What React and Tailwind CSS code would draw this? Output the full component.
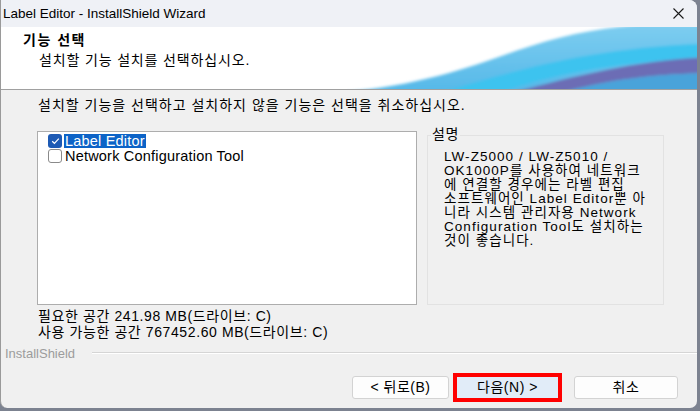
import React from 'react';

const FONT = '"Liberation Sans", "Noto Sans CJK KR", sans-serif';

const Wave = () => (
    <svg className="absolute right-0 top-0 h-full w-[350px]" viewBox="0 0 350 63" preserveAspectRatio="none">
        <defs>
            <linearGradient id="waveBase" x1="0" y1="0" x2="0" y2="1">
                <stop offset="0" stopColor="#7dcdf0" />
                <stop offset="1" stopColor="#55b8e8" />
            </linearGradient>
            <filter id="soft" x="-5%" y="-20%" width="110%" height="140%">
                <feGaussianBlur stdDeviation="1.6" />
            </filter>
        </defs>
        <g filter="url(#soft)">
            <path d="M-4,66 C70,60 120,42 170,24 C210,10 245,2 290,-2 L356,-2 L356,66 Z" fill="url(#waveBase)" />
            <path d="M95,66 C165,46 235,22 356,17 L356,33 C262,35 195,52 155,66 Z" fill="#3ec3ef" />
            <path d="M168,66 C228,50 290,34 356,31 L356,47 C300,48 252,56 218,66 Z" fill="#6c6db5" />
            <path d="M218,66 C252,56 300,48 356,47 L356,66 Z" fill="#4aa3da" />
        </g>
    </svg>
);

const Checkbox = ({ checked }) => (
    checked ? (
        <span className="w-[14px] h-[14px] rounded-[3px] bg-[#1d5ab4] flex items-center justify-center shrink-0">
            <svg width="9" height="8" viewBox="0 0 9 8">
                <polyline points="1.2,4.3 3.4,6.3 7.8,1.6" fill="none" stroke="#fff" strokeWidth="1.2" />
            </svg>
        </span>
    ) : (
        <span className="w-[14px] h-[14px] rounded-[3px] bg-white border border-[#8a8a8a] shrink-0" />
    )
);

const Button = ({ children, className = '' }) => (
    <button className={`h-[23px] rounded-[3px] border border-[#d3d3d3] bg-[#fdfdfd] text-[14px] tracking-[0.5px] text-black flex items-center justify-center ${className}`}>
        {children}
    </button>
);

export default function App() {
    const description = [
        'LW-Z5000 / LW-Z5010 /',
        'OK1000P를 사용하여 네트워크',
        '에 연결할 경우에는 라벨 편집',
        '소프트웨어인 Label Editor뿐 아',
        '니라 시스템 관리자용 Network',
        'Configuration Tool도 설치하는',
        '것이 좋습니다.',
    ];

    return (
        <div className="w-[700px] h-[411px] bg-[#7c8290] overflow-hidden" style={{ fontFamily: FONT }}>
            <div className="w-[697px] h-[408px] bg-[#f0f0f0] border-l border-[#9a9a9a] rounded-tr-[8px] rounded-b-[7px] overflow-hidden flex flex-col">
                {/* Title bar */}
                <div className="h-[27px] bg-[#eff1f6] flex items-center justify-between pl-[2px] pr-[13px]">
                    <span className="text-[13.5px] text-black leading-none">Label Editor - InstallShield Wizard</span>
                    <svg width="11" height="11" viewBox="0 0 11 11">
                        <path d="M0.5,0.5 L10.5,10.5 M10.5,0.5 L0.5,10.5" stroke="#1a1a1a" strokeWidth="1.1" />
                    </svg>
                </div>

                {/* Header banner */}
                <div className="relative h-[63px] bg-white border-b border-[#a0a0a0]">
                    <Wave />
                    <div className="relative pl-[22px] pt-[4px]">
                        <div className="text-[14px] font-bold tracking-[1.5px] leading-[18px] text-black">기능 선택</div>
                        <div className="pl-[16px] mt-[2px] text-[14px] tracking-[0.85px] leading-[18px] text-black">설치할 기능 설치를 선택하십시오.</div>
                    </div>
                </div>

                {/* Body */}
                <div className="flex-1 flex flex-col pl-[36px] pt-[7px]">
                    <div className="pl-[1px] text-[14px] tracking-[1px] leading-[16px] text-black">
                        설치할 기능을 선택하고 설치하지 않을 기능은 선택을 취소하십시오.
                    </div>

                    <div className="flex mt-[18px] gap-[10px]">
                        <div className="w-[380px] h-[174px] bg-white border border-[#adadad] pt-[1px] pl-[10px]">
                            <div className="flex items-center h-[15px]">
                                <Checkbox checked />
                                <span className="ml-[2px] bg-[#0c63c7] text-white text-[14.5px] tracking-[0.2px] leading-[14px] px-[1px]">Label Editor</span>
                            </div>
                            <div className="flex items-center h-[15px]">
                                <Checkbox />
                                <span className="ml-[2px] text-black text-[14.5px] tracking-[0.2px] leading-[14px] px-[1px]">Network Configuration Tool</span>
                            </div>
                        </div>

                        <div className="relative mt-[4px] w-[237px] h-[170px] border border-[#e2e2e2]">
                            <span className="absolute -top-[10px] left-[3px] bg-[#f0f0f0] px-[1px] text-[14px] tracking-[0.5px] leading-[16px] text-black">설명</span>
                            <div className="pl-[16px] pt-[14px] text-[13.5px] tracking-[1.05px] leading-[14px] text-black">
                                {description.map((line) => (
                                    <div key={line} className="h-[14px]">{line}</div>
                                ))}
                            </div>
                        </div>
                    </div>

                    <div className="mt-[3px] pl-[1px] text-[14px] tracking-[0.6px] leading-[16px] text-black">
                        <div>필요한 공간 241.98 MB(드라이브: C)</div>
                        <div>사용 가능한 공간 767452.60 MB(드라이브: C)</div>
                    </div>

                    <div className="flex items-center -ml-[32px] mt-[5px] h-[16px]">
                        <span className="text-[13px] text-[#9c9c9c] leading-none">InstallShield</span>
                        <div className="flex-1 ml-[17px] border-t border-[#d5d5d5] border-b border-b-white" />
                    </div>

                    <div className="flex items-center justify-end pr-[19px] mt-[12px]">
                        <Button className="w-[97px]">&lt; 뒤로(B)</Button>
                        <div className="ml-[4px] border-[4px] border-[#ff0000]">
                            <button className="w-[101px] h-[21px] bg-[#e1ecf8] text-[14px] tracking-[0.5px] text-black flex items-center justify-center">
                                다음(N) &gt;
                            </button>
                        </div>
                        <Button className="ml-[12px] w-[104px]">취소</Button>
                    </div>
                </div>
            </div>
        </div>
    );
}
